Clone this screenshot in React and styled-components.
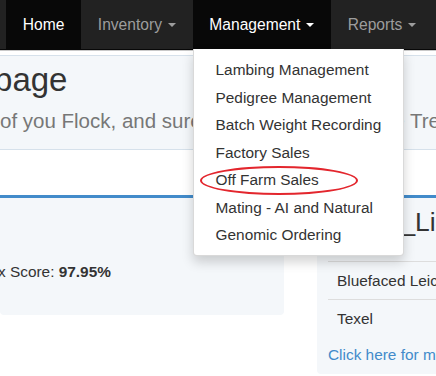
import styled, { createGlobalStyle } from 'styled-components';

const GlobalStyle = createGlobalStyle`
	html, body {
		margin: 0;
		padding: 0;
		background: #fff;
	}

	body {
		width: 436px;
		height: 376px;
		overflow: hidden;
		font-family: "Liberation Sans", Arial, sans-serif;
		font-size: 15.4px;
		line-height: 22px;
		color: #333;
	}
`;

const Navbar = styled.nav`
	position: relative;
	z-index: 10;
	display: flex;
	height: 49px;
	padding-left: 6px;
	background: #222;
	border-bottom: 1px solid #080808;
	box-shadow: 0 1px 0 #c9c9c9;
	font-size: 15.6px;
`;

const NavItem = styled.div`
	position: relative;
	display: flex;
	align-items: center;
	padding: 0 16.6px 0 16.8px;
	background: ${(props) => (props.$active ? '#080808' : 'transparent')};
	color: ${(props) => (props.$active ? '#fff' : '#9d9d9d')};
	white-space: nowrap;
`;

const Caret = styled.span`
	display: inline-block;
	width: 0;
	height: 0;
	margin-left: 6px;
	border-top: 4.4px solid;
	border-left: 4.4px solid transparent;
	border-right: 4.4px solid transparent;
`;

const Dropdown = styled.ul`
	position: absolute;
	top: 100%;
	left: 0;
	margin: 0;
	padding: 7.5px 0 5.5px;
	list-style: none;
	background: #fff;
	border: 1px solid rgba(0, 0, 0, 0.15);
	border-top: 0;
	border-radius: 0 0 4px 4px;
	box-shadow: 0 6px 12px rgba(0, 0, 0, 0.175);
	font-size: 15.4px;
`;

const DropItem = styled.li`
	position: relative;
	padding: 3.75px 22px;
	line-height: 20px;
	color: #333;
	white-space: nowrap;
`;

const Circled = styled.span`
	position: absolute;
	left: 6px;
	top: -1px;
	width: 158px;
	height: 29px;
	box-sizing: border-box;
	border: 2px solid #e3262d;
	border-radius: 50%;
	pointer-events: none;
`;

const Jumbotron = styled.header`
	margin-top: 5px;
	padding: 6px 0 15px;
	background: #f4f7fa;
	border-top: 1px solid #d6e1eb;
	border-bottom: 1px solid #d6e1eb;
	white-space: nowrap;
`;

const Title = styled.h1`
	margin: 0 0 0 ${(props) => props.$shift || 0}px;
	font-size: 33px;
	line-height: 36px;
	font-weight: 400;
	color: #333;
`;

const Lead = styled.p`
	margin: 10px 0 0;
	font-size: 20.5px;
	line-height: 26px;
	color: #777;
`;

const Row = styled.div`
	display: flex;
	align-items: flex-start;
	gap: 33px;
	margin-top: 45px;
`;

const Panel = styled.section`
	flex: none;
	box-sizing: border-box;
	width: ${(props) => props.$width}px;
	padding: ${(props) => props.$pad};
	background: #f4f7fa;
	border-top: 3px solid #428bca;
	border-radius: 0 0 4px 4px;
	white-space: nowrap;
`;

const Score = styled.div`
	margin-left: ${(props) => props.$shift || 0}px;

	strong {
		font-weight: 700;
	}
`;

const PanelTitle = styled.h3`
	margin: 0 0 24px 2px;
	font-size: 26.4px;
	line-height: 30px;
	font-weight: 400;
	color: #333;
`;

const Table = styled.table`
	width: 100%;
	border-collapse: collapse;

	td {
		padding: 7.5px 9px;
		border-top: 1px solid #ddd;
		line-height: 22px;
	}
`;

const MoreLink = styled.a`
	display: block;
	margin-top: 6.8px;
	color: #428bca;
	text-decoration: none;
`;

const menu = [
	'Lambing Management',
	'Pedigree Management',
	'Batch Weight Recording',
	'Factory Sales',
	'Off Farm Sales',
	'Mating - AI and Natural',
	'Genomic Ordering',
];

const App = () => (
	<>
		<GlobalStyle />
		<Navbar>
			<NavItem $active>Home</NavItem>
			<NavItem>
				Inventory <Caret />
			</NavItem>
			<NavItem $active>
				Management <Caret />
				<Dropdown>
					{menu.map((item) => (
						<DropItem key={item}>
							{item}
							{item === 'Off Farm Sales' && <Circled />}
						</DropItem>
					))}
				</Dropdown>
			</NavItem>
			<NavItem>
				Reports <Caret />
			</NavItem>
		</Navbar>
		<Jumbotron>
			<Title $shift={-94}>Homepage</Title>
			<Lead>of you Flock, and sure to keep an eye on the Trends</Lead>
		</Jumbotron>
		<Row>
			<Panel $width={284} $pad="62.8px 0 32px">
				<Score $shift={-32}>
					Index Score: <strong>97.95%</strong>
				</Score>
			</Panel>
			<Panel $width={240} $pad="9px 11px 8px">
				<PanelTitle>Breed_Links</PanelTitle>
				<Table>
					<tbody>
						<tr>
							<td>Bluefaced Leicester</td>
						</tr>
						<tr>
							<td>Texel</td>
						</tr>
					</tbody>
				</Table>
				<MoreLink href="#">Click here for more breeds</MoreLink>
			</Panel>
		</Row>
	</>
);

export default App;
